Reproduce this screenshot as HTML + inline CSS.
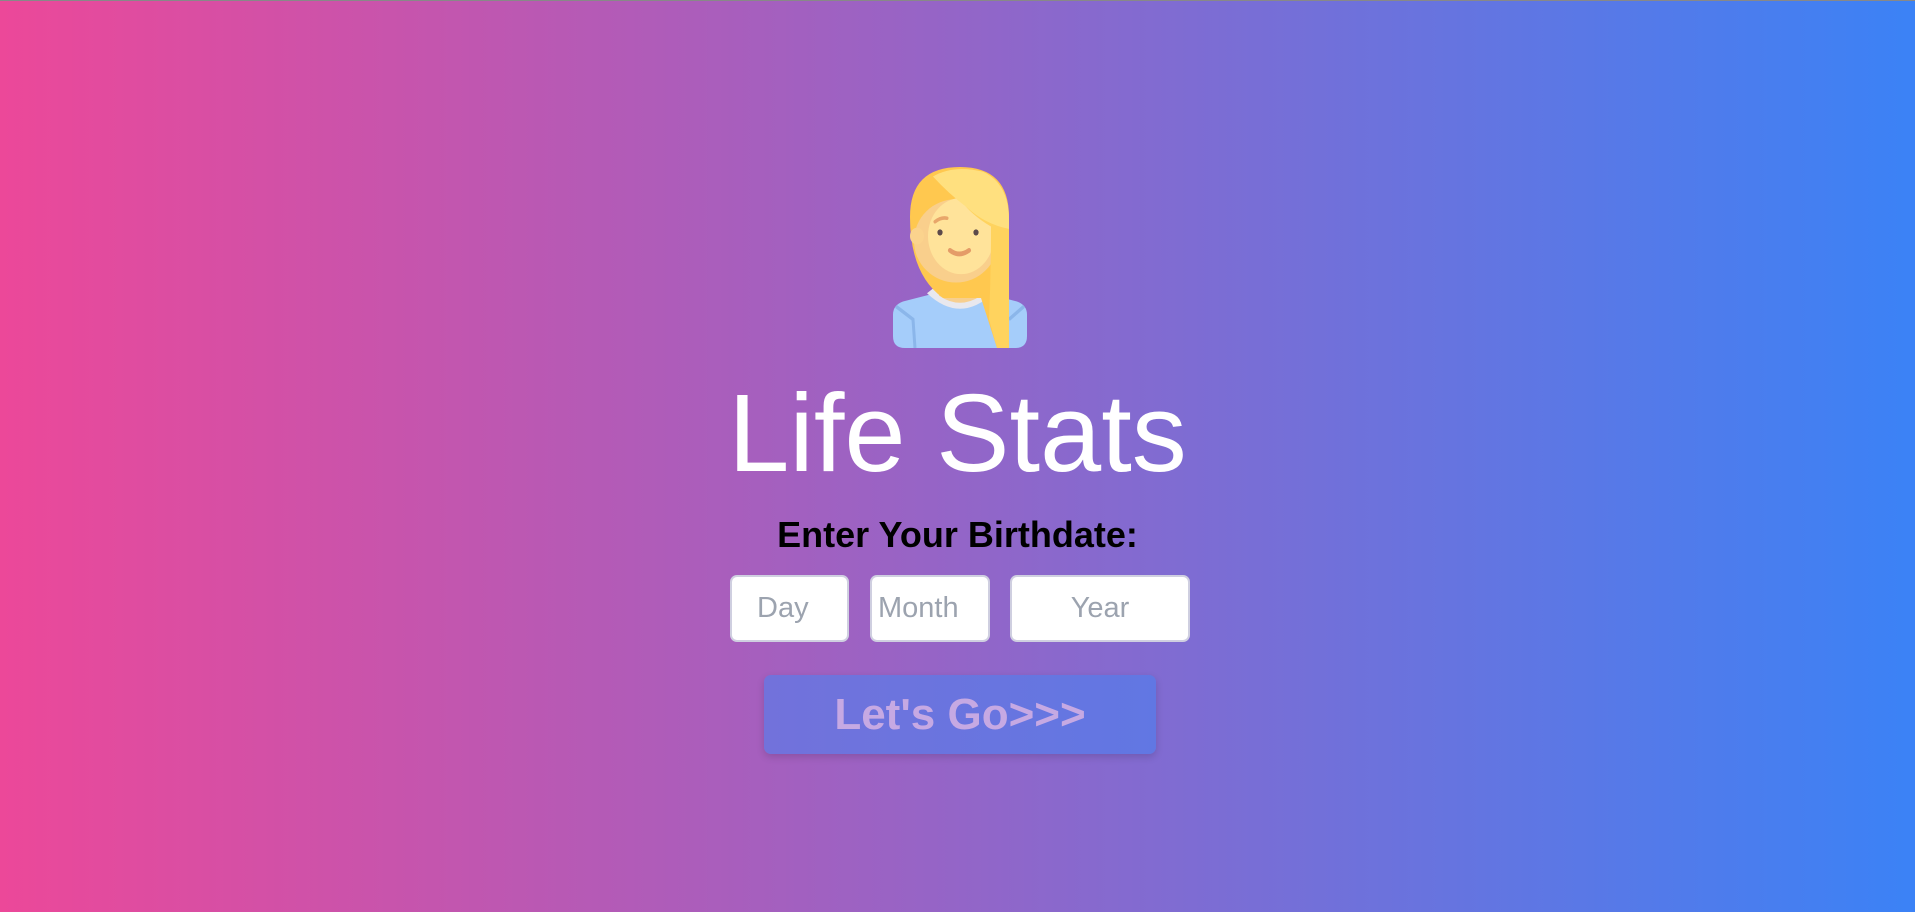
<!DOCTYPE html>
<html><head><meta charset="utf-8"><style>
html,body{margin:0;padding:0;width:1915px;height:912px;overflow:hidden}
body{background:linear-gradient(to right,#ec4899,#3b82f6);font-family:"Liberation Sans",sans-serif;position:relative;border-top:1px solid #888;box-sizing:border-box}
.a{position:absolute}
h1{position:absolute;left:0;width:1915px;top:377px;margin:0;text-align:center;color:#fff;font-weight:normal;font-size:110px;line-height:112px}
h2{position:absolute;left:0;width:1915px;top:516px;margin:0;text-align:center;color:#000;font-weight:bold;font-size:36px;line-height:36px}
.in{position:absolute;top:574px;height:67px;background:#fff;border:2px solid #cfcfe0;border-radius:7px;box-sizing:border-box;color:#9ca3af;font-size:29px;line-height:63px}
.btn{position:absolute;left:764px;top:674px;width:392px;height:79px;border-radius:7px;background:linear-gradient(to right,#7272db,#6177e3);box-shadow:0 3px 8px rgba(0,0,0,.15);color:#c6a9e3;font-weight:bold;font-size:44px;line-height:79px;text-align:center}
</style></head><body>
<svg class="a" style="left:893px;top:166px" width="134" height="181" viewBox="0 0 134 152" preserveAspectRatio="none">
<path d="M12 152 Q0 152 0 142 L0 124 Q0 116 10 113 L42 106 L92 106 L124 113 Q134 116 134 124 L134 142 Q134 152 122 152 Z" fill="#a5cdfa"/>
<path d="M3 117 L20 128 L22 152" stroke="#8bb6ea" stroke-width="3" fill="none"/>
<path d="M131 117 L116 128" stroke="#8bb6ea" stroke-width="3" fill="none"/>
<path d="M34 106 Q67 132 100 106 L94 102 Q67 120 40 102 Z" fill="#e8e8ee"/>
<path d="M46 108 Q67 120 88 108 L88 84 L46 84 Z" fill="#f7cf8f"/>
<path d="M17 42 Q17 0 67 0 Q116 0 116 42 L116 152 L104 152 L88 110 L50 110 Q17 90 17 42 Z" fill="#ffc84f"/>
<ellipse cx="63" cy="62" rx="42" ry="35" fill="#f9cf8c"/>
<ellipse cx="68" cy="58" rx="33" ry="32" fill="#ffe39a"/>
<ellipse cx="24" cy="58" rx="7" ry="7" fill="#fbd38d"/>
<path d="M40 8 Q60 -2 90 4 Q116 14 116 45 L116 152 L104 152 L96 128 Q98 90 98 50 Q78 40 68 28 Q52 18 40 8 Z" fill="#ffd35e"/>
<path d="M40 8 Q60 -2 90 4 Q116 14 116 45 L116 52 Q92 48 74 34 Q55 22 40 8 Z" fill="#ffe07f"/>
<circle cx="47" cy="55" r="2.6" fill="#5c4a4a"/><circle cx="83" cy="55" r="2.6" fill="#5c4a4a"/>
<path d="M42 46 Q48 42 54 43" stroke="#e8a66a" stroke-width="3" fill="none" stroke-linecap="round"/>
<path d="M57 70 Q66 76 76 70" stroke="#e49c68" stroke-width="4" fill="none" stroke-linecap="round"/>
</svg>
<h1>Life Stats</h1>
<h2>Enter Your Birthdate:</h2>
<div class="in" style="left:730px;width:119px;padding-left:25px">Day</div>
<div class="in" style="left:870px;width:120px;padding-left:6px">Month</div>
<div class="in" style="left:1010px;width:180px;text-align:center">Year</div>
<div class="btn">Let's Go&gt;&gt;&gt;</div>
</body></html>
